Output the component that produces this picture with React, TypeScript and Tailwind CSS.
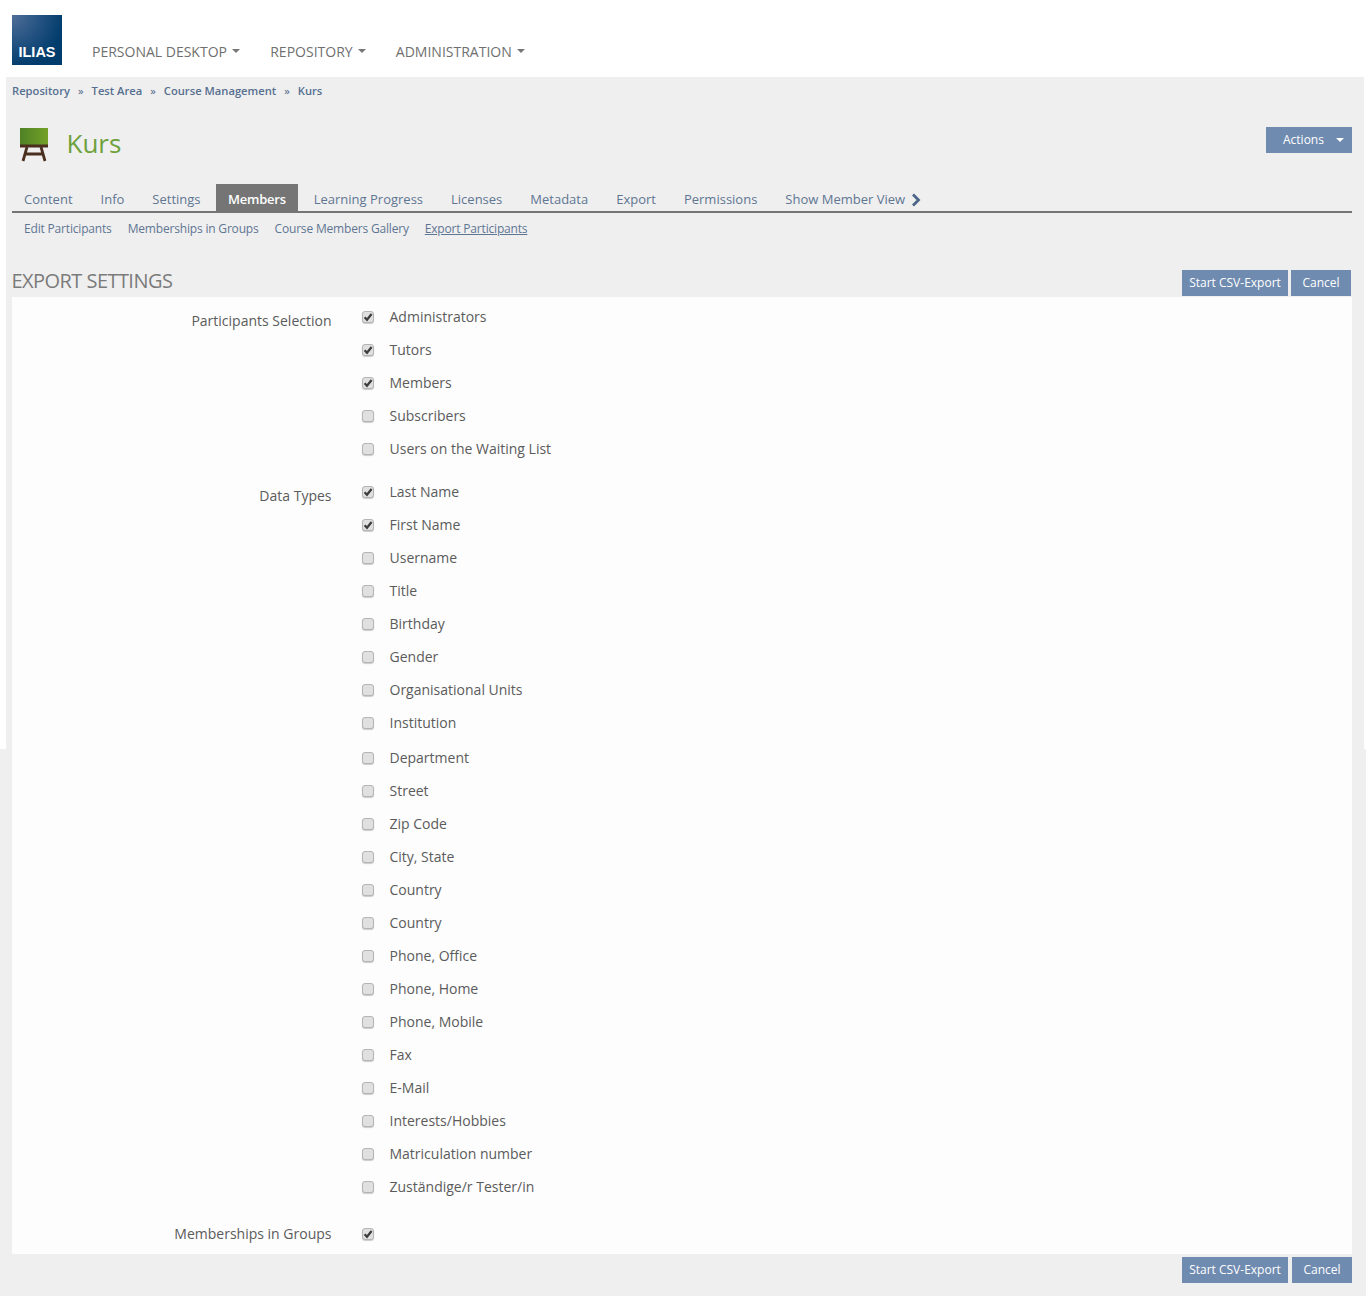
const F = "font-['Open_Sans',sans-serif]";

const Caret = ({ c }: { c: string }) => (
  <span className={`inline-block w-0 h-0 border-x-[4px] border-x-transparent border-t-[4px] ${c}`} />
);

const Check = ({ on }: { on: boolean }) => (
  <span className="flex items-center justify-center w-[12px] h-[12px] rounded-[3px] bg-[#e0e0e0] border border-[#b4b4b4] shadow-[0_1px_1px_rgba(0,0,0,0.2)]">
    {on && (
      <svg width="10" height="10" viewBox="0 0 10 10">
        <path d="M1.6 5.2 L4 7.8 L8.6 2" fill="none" stroke="#3c3c3c" strokeWidth="2.2" />
      </svg>
    )}
  </span>
);

const Row = ({ t, on, cls = "" }: { t: string; on?: boolean; cls?: string }) => (
  <div className={`flex items-center h-[33px] ${cls}`}>
    <Check on={!!on} />
    {t && <span className="ml-[15.5px] text-[14px] text-[#5b5b5b]">{t}</span>}
  </div>
);

const Group = ({ label, children, cls = "", lab = "pt-[9px]" }: { label: string; children: React.ReactNode; cls?: string; lab?: string }) => (
  <div className={`flex ${cls}`}>
    <div className={`w-[319.5px] ${lab} text-right text-[14px] leading-[24px] text-[#5b5b5b]`}>{label}</div>
    <div className="ml-[30.5px]">{children}</div>
  </div>
);

const Btn = ({ t, cls = "" }: { t: string; cls?: string }) => (
  <button className={`h-[26px] bg-[#6f8bb0] text-white text-[12px] flex items-center justify-center ${cls}`}>{t}</button>
);

const tabs = ["Content", "Info", "Settings", "Members", "Learning Progress", "Licenses", "Metadata", "Export", "Permissions"];
const subs = ["Edit Participants", "Memberships in Groups", "Course Members Gallery", "Export Participants"];
const crumbs = ["Repository", "Test Area", "Course Management", "Kurs"];
const nav = ["PERSONAL DESKTOP", "REPOSITORY", "ADMINISTRATION"];
const part: [string, boolean][] = [["Administrators", true], ["Tutors", true], ["Members", true], ["Subscribers", false], ["Users on the Waiting List", false]];
const data1: [string, boolean][] = [["Last Name", true], ["First Name", true], ["Username", false], ["Title", false], ["Birthday", false], ["Gender", false], ["Organisational Units", false], ["Institution", false]];
const data2 = ["Street", "Zip Code", "City, State", "Country", "Country", "Phone, Office", "Phone, Home", "Phone, Mobile", "Fax", "E-Mail", "Interests/Hobbies", "Matriculation number", "Zuständige/r Tester/in"];

export default function App() {
  return (
    <div className={`${F} h-[1296px] overflow-hidden bg-[linear-gradient(#fff_749px,#efefef_749px)]`}>
      <header className="h-[77px] flex pl-[12px] pt-[15px]">
        <div className="relative w-[50px] h-[50px] bg-[radial-gradient(circle_at_0%_0%,#4f6f98_0%,#1f4f7e_45%,#003c6c_75%)] flex items-end justify-center pb-[4px]">
          <span className="font-['Liberation_Sans',sans-serif] font-bold text-white text-[14.5px] leading-[18px]">ILIAS</span>
        </div>
        <nav className="flex items-center h-[50px] ml-[30px] pt-[22px] text-[14px] text-[#6f6f6f]">
          {nav.map((n) => (
            <span key={n} className="flex items-center mr-[30px]">
              {n}
              <span className="ml-[5.25px] flex"><Caret c="border-t-[#777]" /></span>
            </span>
          ))}
        </nav>
      </header>

      <div className="ml-[6px] mr-[2px] h-[1219px] bg-[#efefef] pl-[6px] pr-[12px]">
        <div className="h-[28px] flex items-center text-[11.2px] font-semibold text-[#566f8f]">
          {crumbs.map((c, i) => (
            <span key={c} className="flex items-center">
              {i > 0 && <span className="mx-[8px] font-normal text-[#4c6586]">»</span>}
              {c}
            </span>
          ))}
        </div>

        <div className="flex items-start justify-between pt-[22px] h-[79px]">
          <div className="flex items-start -mt-[2px]">
            <svg width="30" height="34" viewBox="0 0 30 34" className="ml-[7px] mt-[3px]">
              <defs>
                <linearGradient id="g" x1="0" x2="1" y1="0" y2="0">
                  <stop offset="0" stopColor="#4f8126" />
                  <stop offset="1" stopColor="#74a127" />
                </linearGradient>
              </defs>
              <rect x="1" y="0" width="28" height="17" fill="url(#g)" />
              <rect x="1" y="16.5" width="28" height="3" fill="#4a2f1e" />
              <path d="M8 19 L4 33 M22 19 L26 33 M7 26 H23" stroke="#4a2f1e" strokeWidth="2.8" fill="none" />
            </svg>
            <h1 className="ml-[17.5px] mt-[1px] text-[26px] leading-[34px] text-[#6ea03c]">Kurs</h1>
          </div>
          <button className="w-[86px] h-[26px] bg-[#6f8bb0] text-white text-[12px] flex items-center pl-[17px]">
            Actions
            <span className="ml-[12px] flex"><Caret c="border-t-white" /></span>
          </button>
        </div>

        <div className="flex h-[29px] border-b-2 border-[#757575] text-[13px]">
          {tabs.map((t) => (
            <span
              key={t}
              className={`h-[27px] mr-[4px] px-[12px] flex items-center pt-[5px] ${t === "Members" ? "-ml-[0.5px] bg-[#757575] text-white font-semibold tracking-[-0.25px]" : "text-[#5f7693]"}`}
            >
              {t}
            </span>
          ))}
          <span className="h-[27px] px-[12px] flex items-center pt-[5px] text-[#5f7693]">
            Show Member View
            <svg width="10" height="14" viewBox="0 0 10 14" className="ml-[5.5px] -mt-[1px]">
              <path d="M2 1.5 L7.5 7 L2 12.5" fill="none" stroke="#4c6586" strokeWidth="2.8" />
            </svg>
          </span>
        </div>

        <div className="flex h-[32px] items-center pl-[12px] gap-[16px] text-[12px] tracking-[-0.18px] text-[#5f7693]">
          {subs.map((s) => (
            <span key={s} className={s === "Export Participants" ? "underline" : ""}>{s}</span>
          ))}
        </div>

        <div className="flex items-end justify-between h-[52px] pb-[1px]">
          <h2 className="-ml-[0.5px] mb-[2px] text-[20px] leading-[26px] tracking-[-0.55px] text-[#7b7b7b]">EXPORT SETTINGS</h2>
          <div className="flex gap-[3px] mr-[1px]">
            <Btn t="Start CSV-Export" cls="w-[106px]" />
            <Btn t="Cancel" cls="w-[60px]" />
          </div>
        </div>

        <div className="h-[957px] bg-[#fdfdfd] pt-[3px]">
          <Group label="Participants Selection">
            {part.map(([t, on]) => <Row key={t} t={t} on={on} />)}
          </Group>
          <Group label="Data Types" cls="mt-[10px]">
            {data1.map(([t, on]) => <Row key={t} t={t} on={on} />)}
            <Row t="Department" cls="mt-[2px]" />
            {data2.map((t, i) => <Row key={i} t={t} />)}
          </Group>
          <Group label="Memberships in Groups" cls="mt-[14px]" lab="pt-[5px]">
            <Row t="" on />
          </Group>
        </div>

        <div className="flex justify-end gap-[4px] pt-[3px]">
          <Btn t="Start CSV-Export" cls="w-[106px]" />
          <Btn t="Cancel" cls="w-[60px]" />
        </div>
      </div>
    </div>
  );
}
